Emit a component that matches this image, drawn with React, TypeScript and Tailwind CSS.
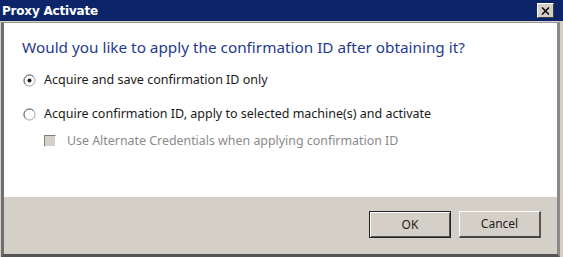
import React from "react";

const Radio = ({ checked }: { checked?: boolean }) => (
    <svg width="13" height="13" viewBox="0 0 13 13" className="shrink-0">
        <circle cx="6.5" cy="6.5" r="5.5" fill="#fff" stroke="#a0a0a0" strokeWidth="1" />
        <path d="M2.6 10.4 A5.5 5.5 0 0 1 10.4 2.6" fill="none" stroke="#707070" strokeWidth="1" />
        {checked && <circle cx="6.5" cy="6.5" r="2" fill="#1a1a1a" />}
    </svg>
);

const Checkbox = () => (
    <div className="w-[12px] h-[12px] shrink-0 bg-[#d4d0c8] border-t border-l border-t-[#808080] border-l-[#808080] border-b border-r border-b-white border-r-white" />
);

const Button = ({ label, isDefault }: { label: string; isDefault?: boolean }) => (
    <div className={"w-[82px] h-[27px] flex items-center justify-center bg-[#d4d0c8] text-[12px] text-[#222] " + (isDefault ? "border border-[#222] shadow-[inset_1px_1px_0_#fff,inset_-1px_-1px_0_#555]" : "border-t border-l border-t-white border-l-white border-b-2 border-r-2 border-b-[#444] border-r-[#555]")}>
        {label}
    </div>
);

const App = () => {
    return (
        <div className="w-[563px] h-[257px] flex flex-col bg-[#d4d0c8] overflow-hidden" style={{ fontFamily: '"Noto Sans", "Open Sans", sans-serif' }}>
            <div className="h-[21px] shrink-0 bg-[#0c2468] flex items-center justify-between pl-[2px] pr-[9px]">
                <span className="text-white font-bold text-[12px] tracking-[-0.2px]" style={{ fontFamily: '"DejaVu Sans", sans-serif' }}>Proxy Activate</span>
                <div className="w-[17px] h-[15px] bg-[#d4d0c8] border-t border-l border-t-white border-l-white border-b border-r border-b-[#404040] border-r-[#404040] flex items-center justify-center">
                    <svg width="9" height="8" viewBox="0 0 9 8">
                        <path d="M1 0.5 L8 7.5 M8 0.5 L1 7.5" stroke="#111" strokeWidth="1.6" />
                    </svg>
                </div>
            </div>
            <div className="flex-1 flex flex-col border-t border-t-[#9a9a9a] border-l-[3px] border-l-[#6e6e6e] border-r-[3px] border-r-[#8a8a8a] border-b-[3px] border-b-[#555] ml-[1px] mr-[3px] mt-[1px]">
                <div className="h-[174px] shrink-0 bg-white flex flex-col pl-[18px] pt-[14px]">
                    <div className="text-[15.3px] text-[#1f3a8f] leading-[20px]">Would you like to apply the confirmation ID after obtaining it?</div>
                    <div className="flex items-center gap-[8px] mt-[14px] pl-[1px] text-[12.5px] text-[#1a1a1a]">
                        <Radio checked />
                        <span>Acquire and save confirmation ID only</span>
                    </div>
                    <div className="flex items-center gap-[8px] mt-[15px] pl-[1px] text-[12.5px] text-[#1a1a1a]">
                        <Radio />
                        <span>Acquire confirmation ID, apply to selected machine(s) and activate</span>
                    </div>
                    <div className="flex items-center gap-[11px] mt-[8px] pl-[22px] text-[12.4px] text-[#8a8a8a]">
                        <Checkbox />
                        <span>Use Alternate Credentials when applying confirmation ID</span>
                    </div>
                </div>
                <div className="flex-1 flex items-start justify-end gap-[8px] pt-[14px] pr-[16px]">
                    <Button label="OK" isDefault />
                    <Button label="Cancel" />
                </div>
            </div>
        </div>
    );
};

export default App;
